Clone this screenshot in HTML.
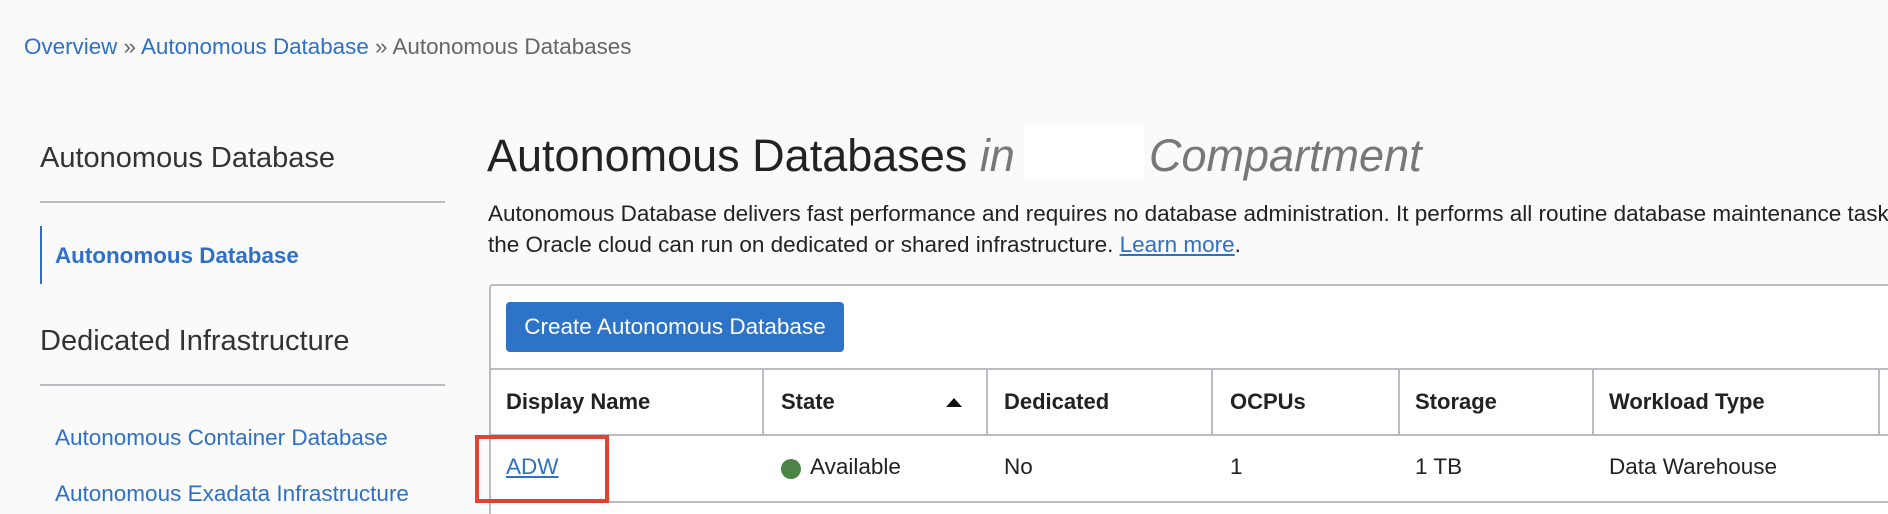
<!DOCTYPE html>
<html><head><meta charset="utf-8"><style>
*{margin:0;padding:0;box-sizing:border-box}
html,body{width:1888px;height:514px;overflow:hidden;background:#fafafa;font-family:"Liberation Sans",Arial,sans-serif;color:#222;position:relative}
.a{position:absolute;white-space:nowrap}
.blue{color:#2e70c7}
.hr{position:absolute;height:2px;background:#b9bcc0}
.h{top:389px;font-size:22px;font-weight:bold}
.d{top:454px;font-size:22.5px}
</style></head><body>
<div class="a" style="left:24px;top:34px;font-size:22.4px;color:#666"><span class="blue">Overview</span> » <span class="blue">Autonomous Database</span> » Autonomous Databases</div>

<div class="a" style="left:40px;top:142px;font-size:29px;color:#333;font-weight:300">Autonomous Database</div>
<div class="hr" style="left:40px;top:201px;width:405px"></div>
<div class="a" style="left:40px;top:226px;width:2px;height:58px;background:#2e70c7"></div>
<div class="a blue" style="left:55px;top:243px;font-size:22.4px;font-weight:bold">Autonomous Database</div>
<div class="a" style="left:40px;top:325px;font-size:29px;color:#333">Dedicated Infrastructure</div>
<div class="hr" style="left:40px;top:384px;width:405px"></div>
<div class="a blue" style="left:55px;top:425px;font-size:22.5px">Autonomous Container Database</div>
<div class="a blue" style="left:55px;top:481px;font-size:22.5px">Autonomous Exadata Infrastructure</div>

<div class="a" style="left:487px;top:130px;font-size:45px;color:#222">Autonomous Databases <i style="color:#777">in</i></div>
<div class="a" style="left:1024px;top:125px;width:120px;height:52px;background:#fff"></div>
<div class="a" style="left:1149px;top:130px;font-size:45px;color:#777;font-style:italic">Compartment</div>
<div class="a" style="left:488px;top:198px;font-size:22.5px;line-height:31px;color:#222">Autonomous Database delivers fast performance and requires no database administration. It performs all routine database maintenance tasks<br>the Oracle cloud can run on dedicated or shared infrastructure. <span class="blue" style="text-decoration:underline">Learn more</span>.</div>

<div class="a" style="left:489px;top:284px;width:1399px;height:230px;background:#fff;border:2px solid #b9bcc0;border-bottom:none;border-right:none;border-radius:4px 0 0 0"></div>
<div class="a" style="left:506px;top:302px;width:338px;height:50px;background:#2d73c8;border-radius:4px;color:#fff;font-size:22.5px;line-height:50px;text-align:center">Create Autonomous Database</div>
<div class="hr" style="left:489px;top:368px;width:1399px"></div>
<div class="hr" style="left:489px;top:434px;width:1399px"></div>
<div class="hr" style="left:489px;top:501px;width:1399px"></div>
<div class="a" style="left:762px;top:369px;width:2px;height:66px;background:#b9bcc0"></div>
<div class="a" style="left:986px;top:369px;width:2px;height:66px;background:#b9bcc0"></div>
<div class="a" style="left:1211px;top:369px;width:2px;height:66px;background:#b9bcc0"></div>
<div class="a" style="left:1398px;top:369px;width:2px;height:66px;background:#b9bcc0"></div>
<div class="a" style="left:1592px;top:369px;width:2px;height:66px;background:#b9bcc0"></div>
<div class="a" style="left:1878px;top:369px;width:2px;height:66px;background:#b9bcc0"></div>
<div class="a h" style="left:506px">Display Name</div>
<div class="a h" style="left:781px">State</div>
<div class="a" style="left:946px;top:398px;width:0;height:0;border-left:8px solid transparent;border-right:8px solid transparent;border-bottom:9px solid #111"></div>
<div class="a h" style="left:1004px">Dedicated</div>
<div class="a h" style="left:1230px">OCPUs</div>
<div class="a h" style="left:1415px">Storage</div>
<div class="a h" style="left:1609px">Workload Type</div>
<div class="a blue d" style="left:506px;text-decoration:underline">ADW</div>
<div class="a" style="left:781px;top:459px;width:20px;height:20px;border-radius:50%;background:#4a8545"></div>
<div class="a d" style="left:810px">Available</div>
<div class="a d" style="left:1004px">No</div>
<div class="a d" style="left:1230px">1</div>
<div class="a d" style="left:1415px">1 TB</div>
<div class="a d" style="left:1609px">Data Warehouse</div>
<div class="a" style="left:475px;top:435px;width:134px;height:68px;border:4px solid #e3432d"></div>
</body></html>
